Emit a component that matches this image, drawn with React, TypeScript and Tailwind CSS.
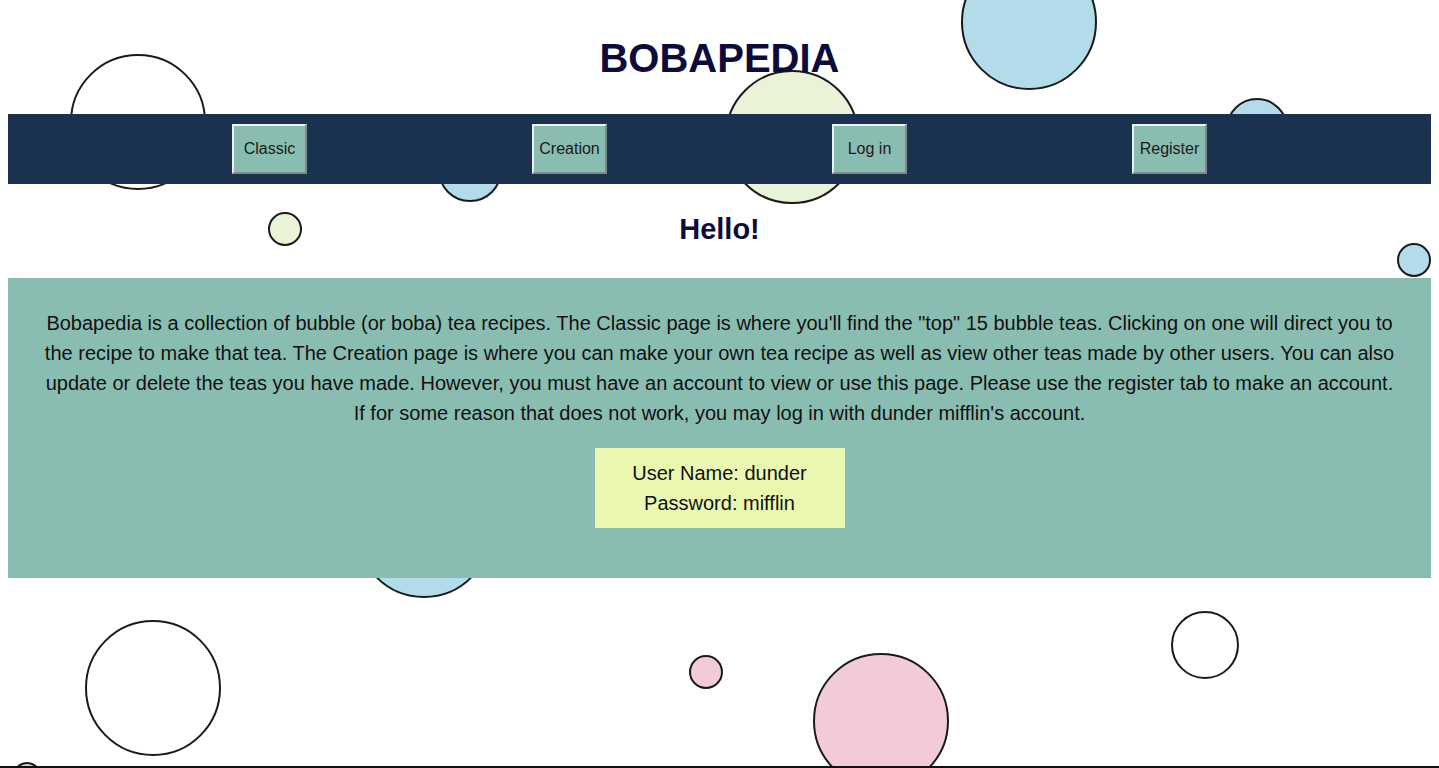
import React from 'react'

type Bubble = { x: number; y: number; r: number; color: string }

// background bubbles, center + radius in page px
const bubbles: Bubble[] = [
  { x: 1029, y: 22, r: 68, color: '#b4dbea' },
  { x: 138, y: 122, r: 68, color: '#ffffff' },
  { x: 792, y: 137, r: 67, color: '#e9f3d7' },
  { x: 1257, y: 129, r: 31, color: '#b4dbea' },
  { x: 470, y: 170, r: 32, color: '#b4dbea' },
  { x: 285, y: 229, r: 17, color: '#e9f3d7' },
  { x: 1414, y: 260, r: 17, color: '#b4dbea' },
  { x: 424, y: 530, r: 68, color: '#b4dbea' },
  { x: 153, y: 688, r: 68, color: '#ffffff' },
  { x: 706, y: 672, r: 17, color: '#f2cad9' },
  { x: 881, y: 721, r: 68, color: '#f2cad9' },
  { x: 1205, y: 645, r: 34, color: '#ffffff' },
  { x: 27, y: 776, r: 14, color: '#b4dbea' },
]

const navItems = ['Classic', 'Creation', 'Log in', 'Register']

export default function App() {
  return (
    <div
      className="relative h-[768px] overflow-hidden bg-white px-2 pt-2"
      style={{ fontFamily: '"Liberation Sans", Arial, sans-serif' }}
    >
      {/* bubbles */}
      {bubbles.map((b, i) => (
        <div
          key={i}
          className="absolute rounded-full border-2 border-[#1a1a1a]"
          style={{ left: b.x - b.r, top: b.y - b.r, width: b.r * 2, height: b.r * 2, backgroundColor: b.color }}
        />
      ))}
      <div className="absolute bottom-0 left-0 right-0 h-[2px] bg-[#111]" />

      <div className="relative">
        <h1 className="mt-[30px] mb-[36px] text-center text-[40px] font-bold leading-10 text-[#0d0b3c]">BOBAPEDIA</h1>

        <nav className="flex h-[70px] items-center justify-center bg-[#1a3150]">
          {navItems.map((item) => (
            <div key={item} className="flex w-[300px] justify-center">
              <button className="h-[50px] w-[75px] border-2 border-t-[#e8f2ef] border-l-[#e8f2ef] border-b-[#7d8a87] border-r-[#7d8a87] bg-[#8abdb1] text-[16px] text-[#1a1a1a]">
                {item}
              </button>
            </div>
          ))}
        </nav>

        <h2 className="mt-[27px] mb-[31px] text-center text-[29px] font-bold leading-9 text-[#0d0b3c]">Hello!</h2>

        <div className="h-[300px] bg-[#8abdb1] px-[30px] pt-[30px] text-center text-[20px] leading-[30px] text-[#111]">
          <p>
            Bobapedia is a collection of bubble (or boba) tea recipes. The Classic page is where you'll find the "top" 15
            bubble teas. Clicking on one will direct you to the recipe to make that tea. The Creation page is where you can
            make your own tea recipe as well as view other teas made by other users. You can also update or delete the teas
            you have made. However, you must have an account to view or use this page. Please use the register tab to make
            an account. If for some reason that does not work, you may log in with dunder mifflin's account.
          </p>
          <div className="mx-auto mt-5 h-[80px] w-[250px] bg-[#e9f7b0] py-[10px]">
            <p>User Name: dunder</p>
            <p>Password: mifflin</p>
          </div>
        </div>
      </div>
    </div>
  )
}
